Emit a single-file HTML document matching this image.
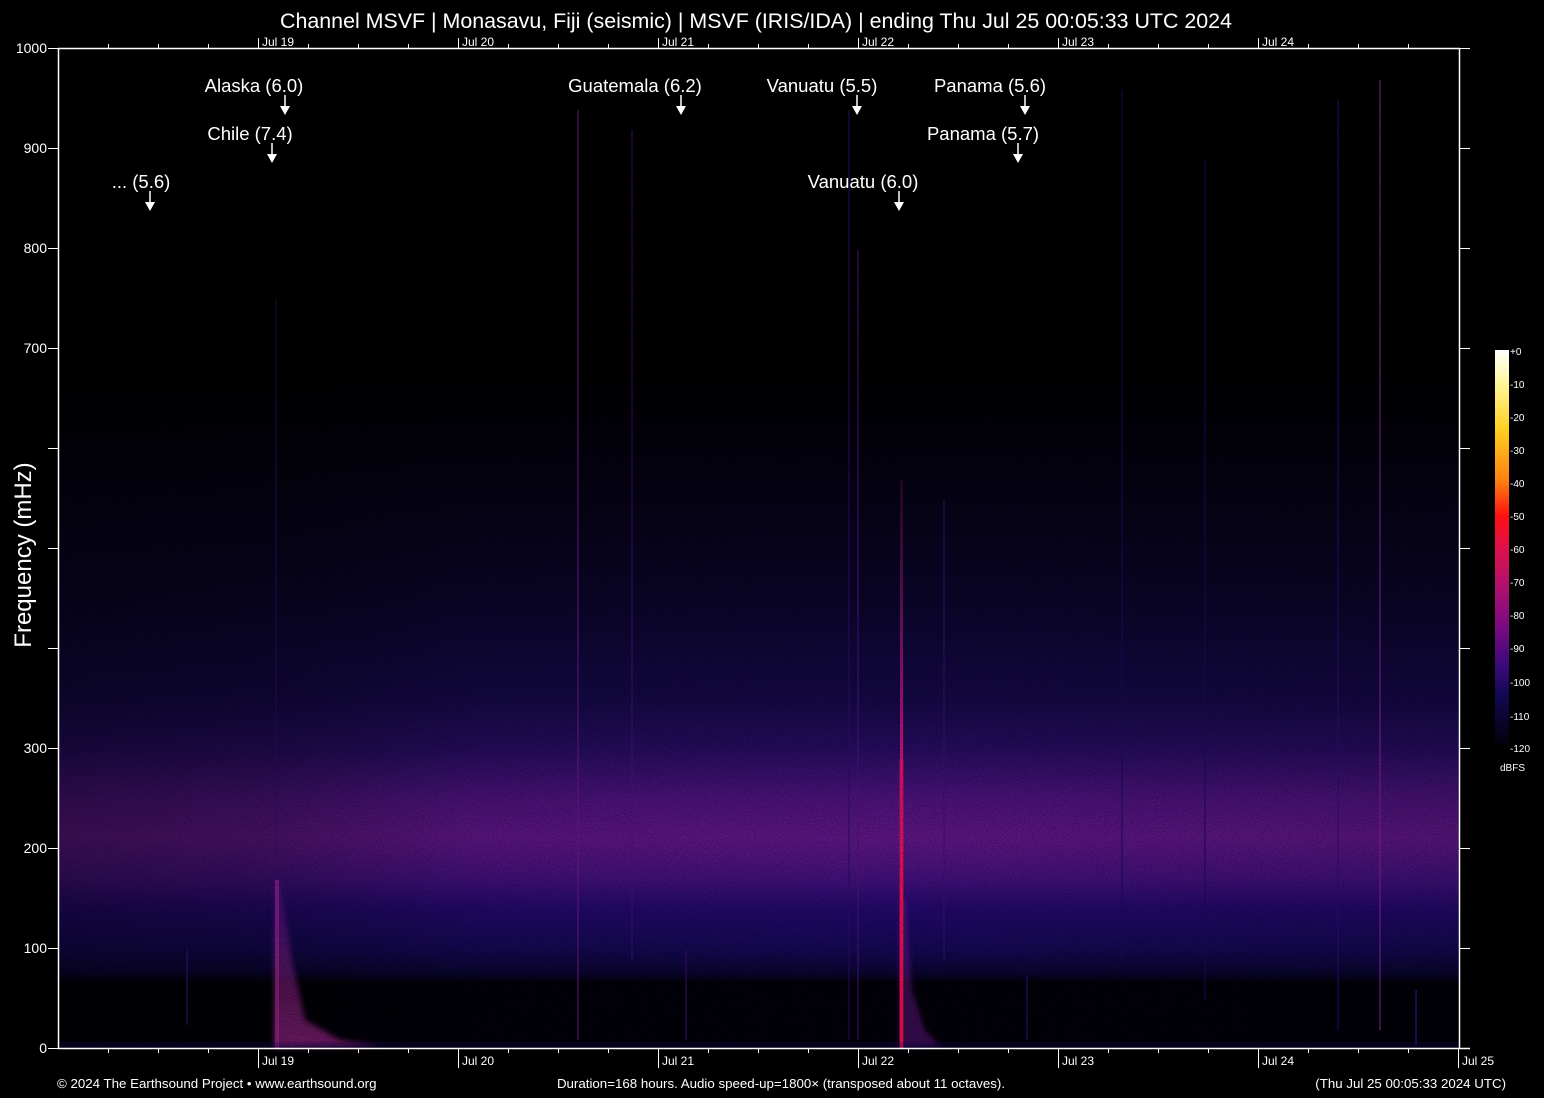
<!DOCTYPE html>
<html><head><meta charset="utf-8"><style>
html,body{margin:0;padding:0;background:#000;width:1544px;height:1098px;overflow:hidden}
svg{display:block}
text{font-family:"Liberation Sans",Arial,sans-serif;fill:#fff}
</style></head><body>
<svg width="1544" height="1098" viewBox="0 0 1544 1098" xmlns="http://www.w3.org/2000/svg">
<defs>
<linearGradient id="bg" x1="0" y1="48" x2="0" y2="1048" gradientUnits="userSpaceOnUse">
<stop offset="0" stop-color="#000"/>
<stop offset="0.32" stop-color="#000"/>
<stop offset="0.42" stop-color="#04020f"/>
<stop offset="0.55" stop-color="#0a0528"/>
<stop offset="0.65" stop-color="#140844"/>
<stop offset="0.70" stop-color="#240c5c"/>
<stop offset="0.75" stop-color="#4a1278"/>
<stop offset="0.79" stop-color="#5c1682"/>
<stop offset="0.83" stop-color="#42107a"/>
<stop offset="0.86" stop-color="#22096a"/>
<stop offset="0.9" stop-color="#140852"/>
<stop offset="0.925" stop-color="#0a0530"/>
<stop offset="0.935" stop-color="#020108"/>
<stop offset="1" stop-color="#020108"/>
</linearGradient>
<linearGradient id="hx" x1="59" y1="0" x2="1459" y2="0" gradientUnits="userSpaceOnUse">
<stop offset="0" stop-color="#000" stop-opacity="0.35"/>
<stop offset="0.15" stop-color="#000" stop-opacity="0.25"/>
<stop offset="0.3" stop-color="#000" stop-opacity="0.05"/>
<stop offset="0.6" stop-color="#000" stop-opacity="0"/>
<stop offset="1" stop-color="#000" stop-opacity="0.1"/>
</linearGradient>
<linearGradient id="ev1" x1="0" y1="860" x2="0" y2="1048" gradientUnits="userSpaceOnUse">
<stop offset="0" stop-color="#7a1a90" stop-opacity="0"/>
<stop offset="0.3" stop-color="#8a1e94" stop-opacity="0.6"/>
<stop offset="1" stop-color="#b02a9a"/>
</linearGradient>
<linearGradient id="ev2" x1="0" y1="480" x2="0" y2="1048" gradientUnits="userSpaceOnUse">
<stop offset="0" stop-color="#8a1a80" stop-opacity="0.2"/>
<stop offset="0.5" stop-color="#d0107a"/>
<stop offset="0.75" stop-color="#f01040"/>
<stop offset="1" stop-color="#e01050"/>
</linearGradient>
<linearGradient id="cb" x1="0" y1="350" x2="0" y2="745" gradientUnits="userSpaceOnUse">
<stop offset="0" stop-color="#ffffff"/>
<stop offset="0.08" stop-color="#fff8a0"/>
<stop offset="0.2" stop-color="#ffd020"/>
<stop offset="0.33" stop-color="#ff8010"/>
<stop offset="0.42" stop-color="#ff1010"/>
<stop offset="0.5" stop-color="#e0104a"/>
<stop offset="0.6" stop-color="#b0106e"/>
<stop offset="0.7" stop-color="#7a0a82"/>
<stop offset="0.8" stop-color="#3a0a7a"/>
<stop offset="0.88" stop-color="#100850"/>
<stop offset="1" stop-color="#02020a"/>
</linearGradient>
<filter id="nz" x="0" y="0" width="1" height="1">
<feTurbulence type="fractalNoise" baseFrequency="0.9" numOctaves="1" seed="3"/>
<feColorMatrix values="0 0 0 0 0  0 0 0 0 0  0 0 0 0 0  0 0 0 -2 1.1"/>
</filter>
<filter id="bl"><feGaussianBlur stdDeviation="3"/></filter>
</defs>
<rect x="59" y="48" width="1400" height="1000" fill="url(#bg)"/>
<rect x="59" y="48" width="1400" height="1000" fill="url(#hx)"/>
<g stroke-width="2">
<line x1="578" y1="110" x2="578" y2="1040" stroke="#6a1880" stroke-opacity="0.5"/>
<line x1="632" y1="130" x2="632" y2="960" stroke="#4a1278" stroke-opacity="0.4"/>
<line x1="858" y1="250" x2="858" y2="1040" stroke="#4a1278" stroke-opacity="0.5"/>
<line x1="849" y1="110" x2="849" y2="1040" stroke="#2a0c66" stroke-opacity="0.5"/>
<line x1="1380" y1="80" x2="1380" y2="1030" stroke="#7a1a86" stroke-opacity="0.6"/>
<line x1="1338" y1="100" x2="1338" y2="1030" stroke="#2a0c70" stroke-opacity="0.5"/>
<line x1="1122" y1="90" x2="1122" y2="960" stroke="#1a0a55" stroke-opacity="0.5"/>
<line x1="1205" y1="160" x2="1205" y2="1000" stroke="#1a0a55" stroke-opacity="0.5"/>
<line x1="944" y1="500" x2="944" y2="960" stroke="#3a1070" stroke-opacity="0.5"/>
<line x1="686" y1="950" x2="686" y2="1040" stroke="#3a1070" stroke-opacity="0.5"/>
<line x1="187" y1="950" x2="187" y2="1025" stroke="#3a1070" stroke-opacity="0.5"/>
<line x1="1416" y1="990" x2="1416" y2="1045" stroke="#3a1090" stroke-opacity="0.6"/>
<line x1="1027" y1="975" x2="1027" y2="1040" stroke="#2a0c70" stroke-opacity="0.6"/>
<line x1="276" y1="300" x2="276" y2="860" stroke="#2a0c60" stroke-opacity="0.4"/>
</g>
<g filter="url(#bl)">
<polygon points="274,880 280,880 292,960 305,1020 340,1040 380,1046 274,1048" fill="url(#ev1)" opacity="0.6"/>
<polygon points="899,900 906,900 912,990 925,1030 940,1046 899,1048" fill="#6a1890" opacity="0.5"/>
</g>
<rect x="275" y="880" width="4" height="168" fill="#b02a9a" opacity="0.5"/>
<rect x="900" y="480" width="3" height="568" fill="url(#ev2)"/>
<rect x="899" y="760" width="5" height="288" fill="#e01050" opacity="0.35"/>
<rect x="59" y="1042" width="1400" height="6" fill="#1a0a60" opacity="0.3"/>
<rect x="59" y="48" width="1400" height="1000" filter="url(#nz)" opacity="0.6"/>

<g stroke="#fff" stroke-width="1.5" fill="none">
<line x1="58" y1="48.5" x2="1460" y2="48.5"/>
<line x1="58" y1="1048.5" x2="1470" y2="1048.5"/>
<line x1="58.5" y1="48" x2="58.5" y2="1049"/>
<line x1="1459.5" y1="48" x2="1459.5" y2="1049"/>
</g>
<g stroke="#fff" stroke-width="1">
<path d="M48 48.5H58M48 148.5H58M48 248.5H58M48 348.5H58M48 448.5H58M48 548.5H58M48 648.5H58M48 748.5H58M48 848.5H58M48 948.5H58M48 1048.5H58"/>
<path d="M1460 48.5H1470M1460 148.5H1470M1460 248.5H1470M1460 348.5H1470M1460 448.5H1470M1460 548.5H1470M1460 648.5H1470M1460 748.5H1470M1460 848.5H1470M1460 948.5H1470"/>
<path d="M108.5 1048V1053M158.5 1048V1053M208.5 1048V1053M308.5 1048V1053M358.5 1048V1053M408.5 1048V1053M508.5 1048V1053M558.5 1048V1053M608.5 1048V1053M708.5 1048V1053M758.5 1048V1053M808.5 1048V1053M908.5 1048V1053M958.5 1048V1053M1008.5 1048V1053M1108.5 1048V1053M1158.5 1048V1053M1208.5 1048V1053M1308.5 1048V1053M1358.5 1048V1053M1408.5 1048V1053"/>
<path d="M258.5 1048V1068M458.5 1048V1068M658.5 1048V1068M858.5 1048V1068M1058.5 1048V1068M1258.5 1048V1068M1458.5 1048V1068"/>
<path d="M108.5 44V48M158.5 44V48M208.5 44V48M308.5 44V48M358.5 44V48M408.5 44V48M508.5 44V48M558.5 44V48M608.5 44V48M708.5 44V48M758.5 44V48M808.5 44V48M908.5 44V48M958.5 44V48M1008.5 44V48M1108.5 44V48M1158.5 44V48M1208.5 44V48M1308.5 44V48M1358.5 44V48M1408.5 44V48"/>
<path d="M258.5 38V48M458.5 38V48M658.5 38V48M858.5 38V48M1058.5 38V48M1258.5 38V48"/>
</g>

<g font-size="14" text-anchor="end">
<text x="47" y="53">1000</text>
<text x="47" y="153">900</text>
<text x="47" y="253">800</text>
<text x="47" y="353">700</text>
<text x="47" y="753">300</text>
<text x="47" y="853">200</text>
<text x="47" y="953">100</text>
<text x="47" y="1053">0</text>
</g>
<g font-size="12">
<text x="262" y="46">Jul 19</text><text x="462" y="46">Jul 20</text><text x="662" y="46">Jul 21</text>
<text x="862" y="46">Jul 22</text><text x="1062" y="46">Jul 23</text><text x="1262" y="46">Jul 24</text>
<text x="262" y="1065">Jul 19</text><text x="462" y="1065">Jul 20</text><text x="662" y="1065">Jul 21</text>
<text x="862" y="1065">Jul 22</text><text x="1062" y="1065">Jul 23</text><text x="1262" y="1065">Jul 24</text>
<text x="1462" y="1065">Jul 25</text>
</g>
<g font-size="13.3">
<text x="57" y="1088">© 2024 The Earthsound Project • www.earthsound.org</text>
<text x="781" y="1088" text-anchor="middle">Duration=168 hours. Audio speed-up=1800× (transposed about 11 octaves).</text>
<text x="1506" y="1088" text-anchor="end">(Thu Jul 25 00:05:33 2024 UTC)</text>
</g>
<text x="756" y="28" font-size="21.4" text-anchor="middle">Channel MSVF | Monasavu, Fiji (seismic) | MSVF (IRIS/IDA) | ending Thu Jul 25 00:05:33 UTC 2024</text>
<text transform="translate(31,555) rotate(-90)" font-size="24" text-anchor="middle">Frequency (mHz)</text>

<rect x="1495" y="350" width="14" height="395" fill="url(#cb)"/>
<g font-size="10" fill="#ddd">
<text x="1510" y="355">+0</text><text x="1510" y="388">-10</text><text x="1510" y="421">-20</text>
<text x="1510" y="454">-30</text><text x="1510" y="487">-40</text><text x="1510" y="520">-50</text>
<text x="1510" y="553">-60</text><text x="1510" y="586">-70</text><text x="1510" y="619">-80</text>
<text x="1510" y="652">-90</text><text x="1510" y="686">-100</text><text x="1510" y="720">-110</text>
<text x="1510" y="752">-120</text><text x="1500" y="771">dBFS</text>
</g>

<g font-size="18.5" text-anchor="middle">
<text x="254" y="92">Alaska (6.0)</text>
<text x="250" y="140">Chile (7.4)</text>
<text x="141" y="188">... (5.6)</text>
<text x="635" y="92">Guatemala (6.2)</text>
<text x="822" y="92">Vanuatu (5.5)</text>
<text x="990" y="92">Panama (5.6)</text>
<text x="983" y="140">Panama (5.7)</text>
<text x="863" y="188">Vanuatu (6.0)</text>
</g>
<g stroke="#fff" stroke-width="1.5">
<path d="M285 95V107M272 143V155M150 191V203M681 95V107M857 95V107M1025 95V107M1018 143V155M899 191V203"/>
</g>
<g fill="#fff">
<path d="M280 106h10l-5 9z"/><path d="M267 154h10l-5 9z"/><path d="M145 202h10l-5 9z"/>
<path d="M676 106h10l-5 9z"/><path d="M852 106h10l-5 9z"/><path d="M1020 106h10l-5 9z"/>
<path d="M1013 154h10l-5 9z"/><path d="M894 202h10l-5 9z"/>
</g>
</svg>
</body></html>
